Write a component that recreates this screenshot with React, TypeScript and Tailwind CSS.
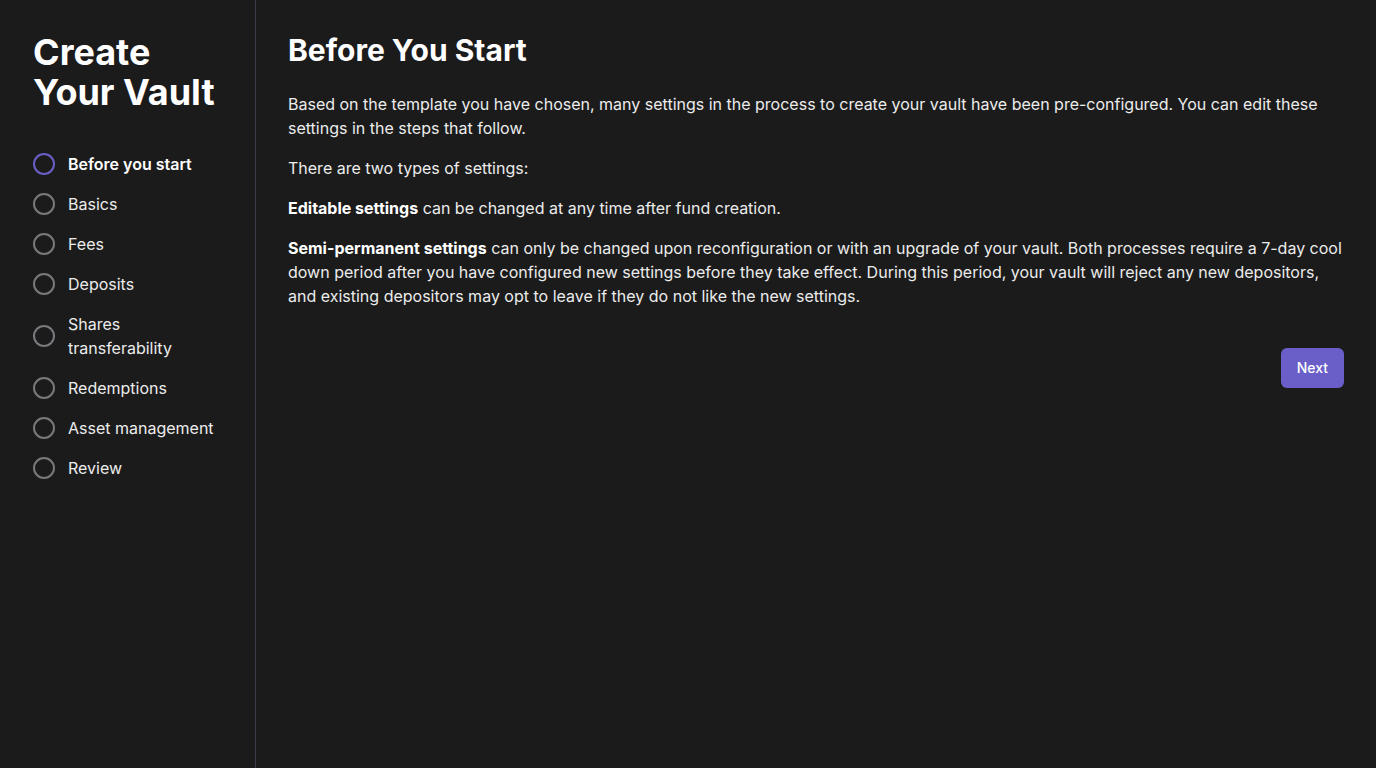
import React from 'react';

const steps = [
  'Before you start',
  'Basics',
  'Fees',
  'Deposits',
  'Shares transferability',
  'Redemptions',
  'Asset management',
  'Review',
];

export default function App() {
  const active = 0;

  return (
    <div
      className="flex min-h-[768px] w-full bg-[#1b1b1b] text-[#f2f2f2]"
      style={{ fontFamily: 'Inter, "Noto Sans", sans-serif' }}
    >
      <aside className="w-[256px] shrink-0 border-r border-[#3b3d4a] px-[33px] pt-8">
        <h1 className="text-4xl leading-10 font-bold text-white">
          Create
          <br />
          Your Vault
        </h1>
        <nav className="mt-10 flex flex-col gap-4">
          {steps.map((step, i) => (
            <div key={step} className="flex items-center gap-[13px]">
              <span
                className={`h-[22px] w-[22px] shrink-0 rounded-full border-2 ${
                  i === active ? 'border-[#6a5fc8]' : 'border-[#7a7a7e]'
                }`}
              />
              <span
                className={`text-base leading-6 ${
                  i === active ? 'font-semibold text-white' : 'text-[#ececec]'
                }`}
              >
                {step}
              </span>
            </div>
          ))}
        </nav>
      </aside>

      <main className="flex-1 px-8 pt-8">
        <h2 className="text-3xl leading-9 font-bold text-white">Before You Start</h2>
        <div className="mt-6 flex flex-col gap-4 text-base leading-6 text-[#ececec]">
          <p>
            Based on the template you have chosen, many settings in the process to create your vault have been
            pre-configured. You can edit these settings in the steps that follow.
          </p>
          <p>There are two types of settings:</p>
          <p>
            <strong className="font-bold text-white">Editable settings</strong> can be changed at any time after fund
            creation.
          </p>
          <p>
            <strong className="font-bold text-white">Semi-permanent settings</strong> can only be changed upon
            reconfiguration or with an upgrade of your vault. Both processes require a 7-day cool down period after
            you have configured new settings before they take effect. During this period, your vault will reject any
            new depositors, and existing depositors may opt to leave if they do not like the new settings.
          </p>
        </div>
        <div className="mt-10 flex justify-end">
          <button className="h-10 rounded-md bg-[#6a5fc8] px-4 text-sm font-medium text-white">Next</button>
        </div>
      </main>
    </div>
  );
}
